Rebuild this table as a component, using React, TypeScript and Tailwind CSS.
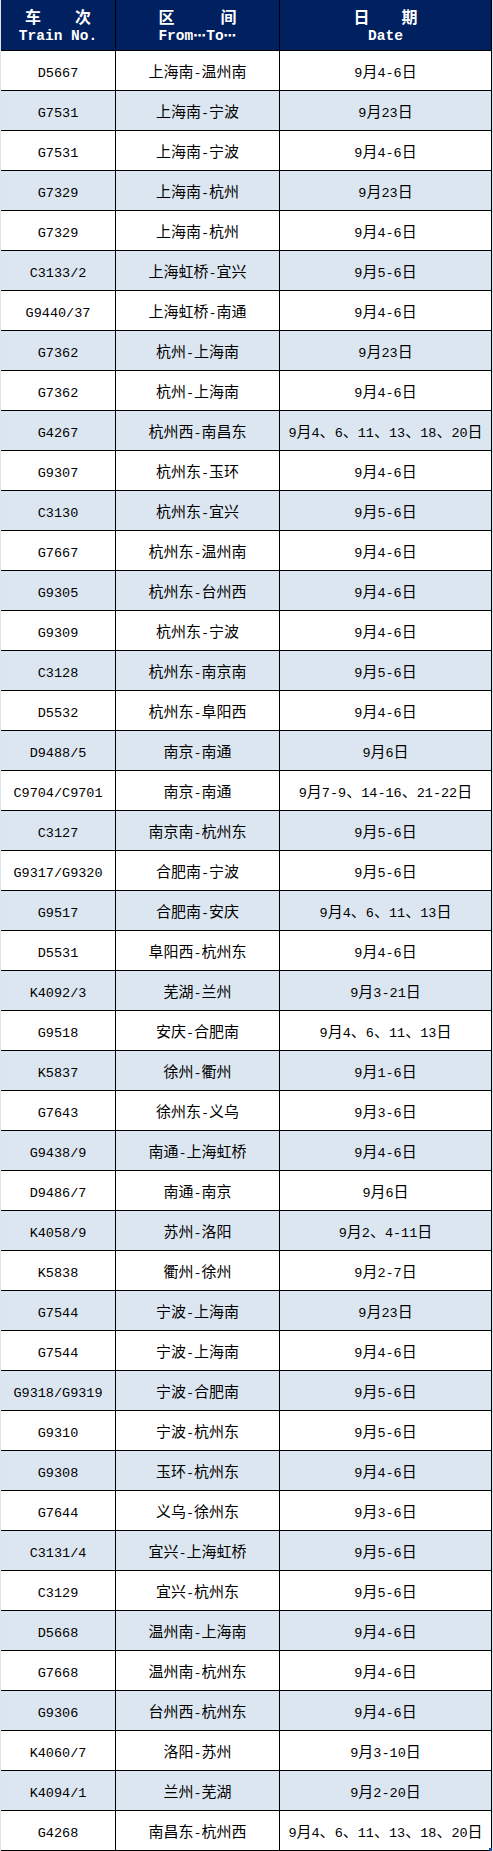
import React from 'react';

const rows: [string, string, string][] = [
  ['D5667', '上海南-温州南', '9月4-6日'],
  ['G7531', '上海南-宁波', '9月23日'],
  ['G7531', '上海南-宁波', '9月4-6日'],
  ['G7329', '上海南-杭州', '9月23日'],
  ['G7329', '上海南-杭州', '9月4-6日'],
  ['C3133/2', '上海虹桥-宜兴', '9月5-6日'],
  ['G9440/37', '上海虹桥-南通', '9月4-6日'],
  ['G7362', '杭州-上海南', '9月23日'],
  ['G7362', '杭州-上海南', '9月4-6日'],
  ['G4267', '杭州西-南昌东', '9月4、6、11、13、18、20日'],
  ['G9307', '杭州东-玉环', '9月4-6日'],
  ['C3130', '杭州东-宜兴', '9月5-6日'],
  ['G7667', '杭州东-温州南', '9月4-6日'],
  ['G9305', '杭州东-台州西', '9月4-6日'],
  ['G9309', '杭州东-宁波', '9月4-6日'],
  ['C3128', '杭州东-南京南', '9月5-6日'],
  ['D5532', '杭州东-阜阳西', '9月4-6日'],
  ['D9488/5', '南京-南通', '9月6日'],
  ['C9704/C9701', '南京-南通', '9月7-9、14-16、21-22日'],
  ['C3127', '南京南-杭州东', '9月5-6日'],
  ['G9317/G9320', '合肥南-宁波', '9月5-6日'],
  ['G9517', '合肥南-安庆', '9月4、6、11、13日'],
  ['D5531', '阜阳西-杭州东', '9月4-6日'],
  ['K4092/3', '芜湖-兰州', '9月3-21日'],
  ['G9518', '安庆-合肥南', '9月4、6、11、13日'],
  ['K5837', '徐州-衢州', '9月1-6日'],
  ['G7643', '徐州东-义乌', '9月3-6日'],
  ['G9438/9', '南通-上海虹桥', '9月4-6日'],
  ['D9486/7', '南通-南京', '9月6日'],
  ['K4058/9', '苏州-洛阳', '9月2、4-11日'],
  ['K5838', '衢州-徐州', '9月2-7日'],
  ['G7544', '宁波-上海南', '9月23日'],
  ['G7544', '宁波-上海南', '9月4-6日'],
  ['G9318/G9319', '宁波-合肥南', '9月5-6日'],
  ['G9310', '宁波-杭州东', '9月5-6日'],
  ['G9308', '玉环-杭州东', '9月4-6日'],
  ['G7644', '义乌-徐州东', '9月3-6日'],
  ['C3131/4', '宜兴-上海虹桥', '9月5-6日'],
  ['C3129', '宜兴-杭州东', '9月5-6日'],
  ['D5668', '温州南-上海南', '9月4-6日'],
  ['G7668', '温州南-杭州东', '9月4-6日'],
  ['G9306', '台州西-杭州东', '9月4-6日'],
  ['K4060/7', '洛阳-苏州', '9月3-10日'],
  ['K4094/1', '兰州-芜湖', '9月2-20日'],
  ['G4268', '南昌东-杭州西', '9月4、6、11、13、18、20日'],
];

const CJK = /([\u3000-\u9fff\uff00-\uffef]+)/;

// SimSun-like mix: CJK runs a little bigger than the half-width latin
function Mixed({ text }: { text: string }) {
  const parts = text.split(CJK).filter(Boolean);
  return (
    <span className="whitespace-nowrap">
      {parts.map((p, i) =>
        /[\u3000-\u9fff\uff00-\uffef]/.test(p) ? (
          <span key={i} className="text-[15px] font-['Noto_Sans_CJK_SC',sans-serif]">
            {p}
          </span>
        ) : (
          <span key={i} className="text-[13.5px] font-normal font-['Liberation_Mono',monospace]">
            {p}
          </span>
        )
      )}
    </span>
  );
}

const App: React.FC = () => {
  return (
    <div className="relative min-h-[1851px] w-[493px] bg-[#dbe3ee] pl-px">
      <div className="w-[491px] bg-white">
        {/* header */}
        <div className="flex h-[51px] border-b border-black bg-[#002060] text-white">
          <div className="flex w-[115px] flex-col items-center justify-center border-r border-black pt-[2px]">
            <div className="flex gap-[34px] font-['Noto_Sans_CJK_SC',sans-serif] text-[16px] font-bold leading-[20px]">
              <span>车</span>
              <span>次</span>
            </div>
            <div className="font-['Liberation_Mono',monospace] text-[14.5px] font-bold leading-[20px]">
              Train No.
            </div>
          </div>
          <div className="flex w-[164px] flex-col items-center justify-center border-r border-black pt-[2px]">
            <div className="flex gap-[46px] font-['Noto_Sans_CJK_SC',sans-serif] text-[16px] font-bold leading-[20px]">
              <span>区</span>
              <span>间</span>
            </div>
            <div className="font-['Liberation_Mono',monospace] text-[14.5px] font-bold leading-[20px]">
              From<span className="font-['DejaVu_Sans',sans-serif] text-[13px]">⋯</span>To
              <span className="font-['DejaVu_Sans',sans-serif] text-[13px]">⋯</span>
            </div>
          </div>
          <div className="flex w-[212px] flex-col items-center justify-center border-r border-black pt-[2px]">
            <div className="flex gap-[32px] font-['Noto_Sans_CJK_SC',sans-serif] text-[16px] font-bold leading-[20px]">
              <span>日</span>
              <span>期</span>
            </div>
            <div className="font-['Liberation_Mono',monospace] text-[14.5px] font-bold leading-[20px]">
              Date
            </div>
          </div>
        </div>

        {rows.map(([no, route, date], i) => (
          <div
            key={i}
            className={`flex h-[40px] border-b border-black text-black ${i % 2 === 1 ? 'bg-[#dce6f1]' : 'bg-white'}`}
          >
            <div className="flex w-[115px] items-center justify-center border-r border-black pt-[3px] leading-[20px]">
              <Mixed text={no} />
            </div>
            <div className="flex w-[164px] items-center justify-center border-r border-black pt-[3px] leading-[20px]">
              <Mixed text={route} />
            </div>
            <div className="flex w-[212px] items-center justify-center border-r border-black pt-[3px] leading-[20px]">
              <Mixed text={date} />
            </div>
          </div>
        ))}
      </div>
      {/* excel fill handle */}
      <div className="absolute bottom-0 right-px h-[3px] w-[3px] bg-[#1f4e99]" />
    </div>
  );
};

export default App;
